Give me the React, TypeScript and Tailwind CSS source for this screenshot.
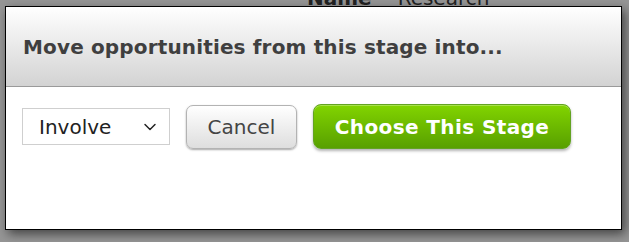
import { ChevronDown } from "lucide-react";

const font = { fontFamily: '"DejaVu Sans", Verdana, sans-serif' };

const App = () => {
  return (
    <div className="w-[629px] h-[242px] overflow-hidden bg-[#969696] flex flex-col" style={font}>
      {/* page content behind the overlay */}
      <div className="h-[6px] shrink-0 overflow-visible flex flex-col">
        <div className="-mt-[12px] pl-[307px] flex gap-[26px] text-[20px] leading-[20px] text-[#222]">
          <span className="font-bold">Name</span>
          <span>Research</span>
        </div>
      </div>

      {/* dialog */}
      <div className="relative ml-[5px] w-[617px] h-[224px] shrink-0 border border-black bg-white shadow-[3px_4px_10px_rgba(0,0,0,0.55)]">
        <div className="h-[80px] flex items-center pl-[17px] bg-gradient-to-b from-[#ffffff] to-[#d3d3d3] border-b border-[#9a9a9a]">
          <h2 className="text-[20px] font-bold text-[#3f3f3f] tracking-[0.15px]">
            Move opportunities from this stage into...
          </h2>
        </div>

        <div className="flex items-center gap-[16px] pl-[16px] pt-[17px]">
          <div className="w-[148px] h-[37px] border border-[#cfcfcf] bg-white flex items-center justify-between pl-[16px] pr-[9px] text-[20px] text-[#222]">
            <span>Involve</span>
            <ChevronDown className="w-[20px] h-[20px]" strokeWidth={1.75} />
          </div>

          <button className="w-[111px] h-[44px] rounded-[7px] border border-[#b3b3b3] bg-gradient-to-b from-[#ffffff] to-[#dedede] shadow-[0_1px_2px_rgba(0,0,0,0.35)] text-[20px] text-[#444]">
            Cancel
          </button>

          <button className="w-[258px] h-[45px] rounded-[8px] border border-[#63a322] bg-gradient-to-b from-[#82d400] to-[#58a000] shadow-[0_2px_3px_rgba(0,0,0,0.3),inset_0_1px_0_rgba(255,255,255,0.3)] text-[20px] font-bold text-white tracking-[0.4px]">
            Choose This Stage
          </button>
        </div>
      </div>
    </div>
  );
};

export default App;
